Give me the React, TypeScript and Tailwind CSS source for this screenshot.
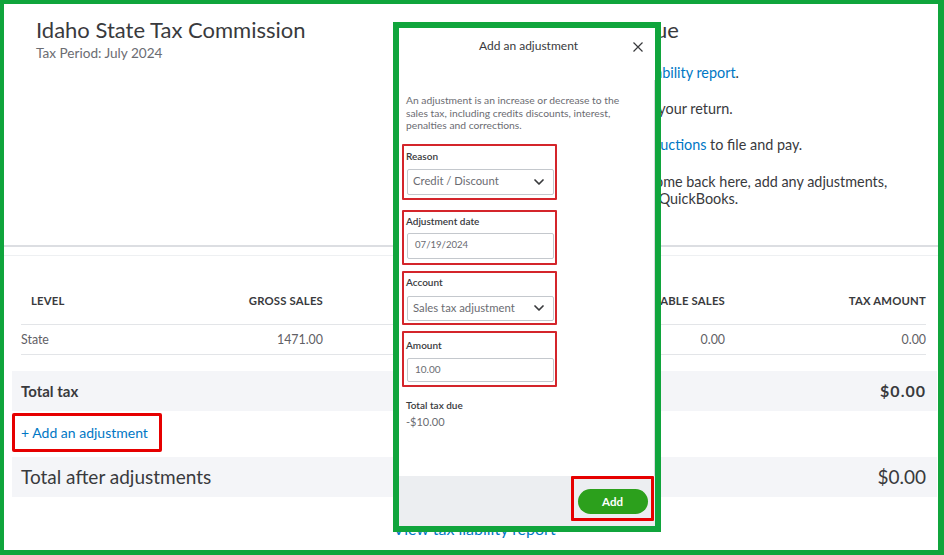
import type { ReactNode } from 'react';
import { ChevronDown } from 'lucide-react';

const headers = ['LEVEL', 'GROSS SALES', 'NONTAXABLE SALES', 'TAXABLE SALES', 'TAX AMOUNT'];
const stateRow = ['State', '1471.00', '1471.00', '0.00', '0.00'];

// one line of the "what's due" steps; the first part sits under the modal
function StepLine({ prefix, children, className = '' }: { prefix: ReactNode; children: ReactNode; className?: string }) {
  return (
    <div className={`flex ${className}`}>
      <span className="flex w-[185px] shrink-0 justify-end overflow-hidden whitespace-nowrap">{prefix}</span>
      <span className="whitespace-pre">{children}</span>
    </div>
  );
}

function Field({ label, children, className = '' }: { label: string; children: ReactNode; className?: string }) {
  return (
    <div className={`w-[155px] rounded-[1px] border-2 border-[#d4252b] pl-[1px] pr-[1px] ${className}`}>
      <div className="pl-[1px] text-[10px] font-semibold leading-[12px] text-[#393a3d]">{label}</div>
      {children}
    </div>
  );
}

export default function App() {
  return (
    <div className="relative h-[555px] w-[944px] overflow-hidden border-t-4 border-l-4 border-r-[6px] border-b-[5px] border-[#10a53c] bg-white font-['Lato',_sans-serif] text-[#393a3d]">
      {/* Header */}
      <header className="flex h-[243px] border-b-2 border-[#dcdee2]">
        <div className="w-[466px] pl-[32px] pt-[13px]">
          <h1 className="text-[22px] leading-[26px]">Idaho State Tax Commission</h1>
          <p className="mt-[2px] text-[13.6px] leading-[16px] text-[#6b6c72]">Tax Period: July 2024</p>
        </div>
        <div className="pt-[13px] text-[14.4px] leading-[17px]">
          <StepLine prefix="Sales tax d" className="text-[22px] leading-[26px]">
            ue
          </StepLine>
          <StepLine prefix={<>1. Review the <span className="text-[#0077c5]">tax li</span></>} className="mt-[21px]">
            <span className="text-[#0077c5]">ability report</span>.
          </StepLine>
          <StepLine prefix="2. Prepare" className="mt-[19px]">
            {' your return.'}
          </StepLine>
          <StepLine prefix={<>3. Use the agency <span className="text-[#0077c5]">inst</span></>} className="mt-[19px]">
            <span className="text-[#0077c5]">ructions</span> to file and pay.
          </StepLine>
          <StepLine prefix="4. When you're done, c" className="mt-[20px]">
            ome back here, add any adjustments,
          </StepLine>
          <StepLine prefix="and record the payment in">{' QuickBooks.'}</StepLine>
        </div>
      </header>
      <div className="h-[9px] border-b border-[#eef0f2]" />

      {/* Tax table */}
      <div className="ml-[8px] mr-[1px]">
        <div className="ml-[9px] mr-[11px] mt-[19px]">
          <div className="grid h-[50px] grid-cols-[101px_201px_201px_201px_201px] items-center border-b border-[#e3e5e8] pt-[3px] text-[11.3px] font-bold tracking-[0.2px]">
            {headers.map((h, i) => (
              <div key={h} className={i === 0 ? 'pl-[10px]' : 'text-right'}>
                {h}
              </div>
            ))}
          </div>
          <div className="grid h-[30px] grid-cols-[101px_201px_201px_201px_201px] items-center border-b border-[#e3e5e8] pt-[2px] text-[12.4px] text-[#5f6065]">
            {stateRow.map((v, i) => (
              <div key={i} className={i === 0 ? '' : 'text-right'}>
                {v}
              </div>
            ))}
          </div>
        </div>

        <div className="mt-[16px] flex h-[40px] items-center justify-between bg-[#f4f5f8] pl-[9px] pr-[11px] font-bold">
          <span className="text-[15px]">Total tax</span>
          <span className="text-[16px] tracking-[1px]">$0.00</span>
        </div>

        <div className="mt-[2px] flex h-[39px] w-[150px] items-center rounded-[2px] border-[3px] border-[#e60000] pl-[6px] text-[14px] text-[#0077c5]">
          + Add an adjustment
        </div>

        <div className="mt-[5px] flex h-[40px] items-center justify-between bg-[#f4f5f8] pl-[9px] pr-[11px] text-[19px]">
          <span>Total after adjustments</span>
          <span>$0.00</span>
        </div>

        <div className="mt-[22px] text-center text-[16px] leading-[19px] text-[#0077c5]">View tax liability report</div>
      </div>

      {/* Add an adjustment modal */}
      <div className="absolute left-[389px] top-[18px] flex h-[510px] w-[268px] flex-col border-[6px] border-[#10a53c] bg-white">
        <div className="relative h-[52px] shrink-0 pl-[3px] pt-[11px] text-center text-[12px] leading-[14px]">
          Add an adjustment
          <svg className="absolute right-[12px] top-[14px]" width="10" height="10" viewBox="0 0 10 10" fill="none" stroke="#393a3d" strokeWidth="1.2">
            <path d="M0.5 0.5 9.5 9.5 M9.5 0.5 0.5 9.5" />
          </svg>
        </div>

        <div className="flex-1 border-r border-[#d8dadd] pl-[3px]">
          <p className="w-[230px] pl-[4px] pt-[14px] text-[10.3px] leading-[12.5px] text-[#6b6c72]">
            An adjustment is an increase or decrease to the sales tax, including credits discounts, interest, penalties and corrections.
          </p>

          <Field label="Reason" className="mt-[12px] pt-[4px] pb-[3px]">
            <div className="mt-[7px] ml-[2px] flex h-[26px] items-center justify-between rounded-[2px] border border-[#c4c8cd] pl-[5px] pr-[6px] text-[11.3px] text-[#6b6c72]">
              <span>Credit / Discount</span>
              <ChevronDown size={16} strokeWidth={2.6} color="#393a3d" />
            </div>
          </Field>

          <Field label="Adjustment date" className="mt-[10px] pt-[3px] pb-[4px]">
            <div className="mt-[6px] ml-[2px] flex h-[26px] items-center rounded-[2px] border border-[#c4c8cd] pl-[7px] text-[9.6px] text-[#6b6c72]">
              07/19/2024
            </div>
          </Field>

          <Field label="Account" className="mt-[6px] pt-[3px] pb-[2px]">
            <div className="mt-[8px] ml-[2px] flex h-[25px] items-center justify-between rounded-[2px] border border-[#c4c8cd] pl-[5px] pr-[6px] text-[11.3px] text-[#6b6c72]">
              <span>Sales tax adjustment</span>
              <ChevronDown size={16} strokeWidth={2.6} color="#393a3d" />
            </div>
          </Field>

          <Field label="Amount" className="mt-[6px] pt-[6px] pb-[3px]">
            <div className="mt-[7px] ml-[2px] flex h-[24px] items-center rounded-[2px] border border-[#c4c8cd] pl-[7px] text-[10px] text-[#6b6c72]">
              10.00
            </div>
          </Field>

          <div className="mt-[12px] pl-[4px] text-[10px] font-semibold leading-[12px]">Total tax due</div>
          <div className="mt-[4px] pl-[4px] text-[11px] leading-[13px] text-[#6b6c72]">-$10.00</div>
        </div>

        <div className="flex h-[50px] shrink-0 items-start justify-end bg-[#eceef1] pr-[1px]">
          <div className="flex h-[45px] w-[83px] justify-center rounded-[1px] border-[3px] border-[#e60000] pt-[10px]">
            <button className="h-[25px] w-[70px] rounded-full bg-[#2ca01c] text-[11.5px] font-bold text-white">Add</button>
          </div>
        </div>
      </div>
    </div>
  );
}
